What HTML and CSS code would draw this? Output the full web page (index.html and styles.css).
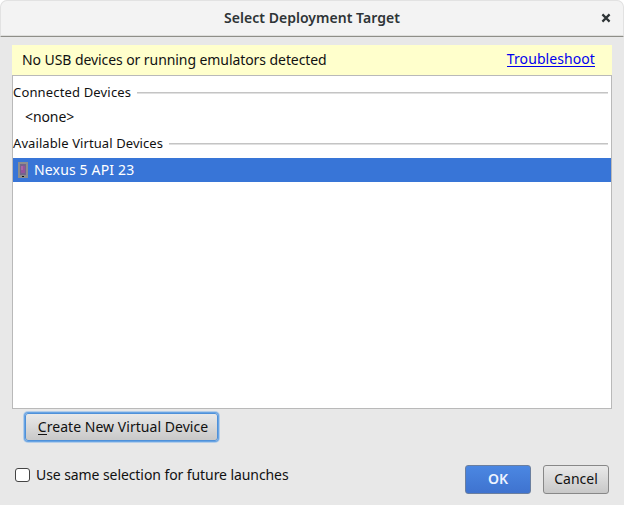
FILE: index.html
```html
<!DOCTYPE html>
<html lang="en">
<head>
<meta charset="utf-8">
<title>Select Deployment Target</title>
<link rel="stylesheet" href="styles.css">
</head>
<body>
<div class="dialog">
  <header class="titlebar">
    <h1 class="title">Select Deployment Target</h1>
    <button class="close" aria-label="Close"><svg width="10" height="10" viewBox="0 0 10 10"><path d="M1.4 1.4 8.6 8.6M8.6 1.4 1.4 8.6"/></svg></button>
  </header>
  <main class="content">
    <div class="banner"><span class="message">No USB devices or running emulators detected</span><a class="link" href="#">Troubleshoot</a></div>
    <div class="list">
      <div class="section first"><span class="connected">Connected Devices</span><i class="rule"></i></div>
      <div class="none">&lt;none&gt;</div>
      <div class="section second"><span class="available">Available Virtual Devices</span><i class="rule"></i></div>
      <div class="device"><svg class="phone" width="10" height="16" viewBox="0 0 10 16" shape-rendering="crispEdges"><path fill="#8e8e8e" d="M0 0h10v16H0z"/><path fill="#74648c" d="M2 2h6v11H2z"/><path fill="#95549b" d="M3 4h4v7H3z"/><path fill="#a967a7" d="M3 4h2v4H3z"/><path fill="#111" d="M4 14h2v1H4z"/></svg><span class="nexus">Nexus 5 API 23</span></div>
    </div>
    <button class="button create"><span class="create-label"><u>C</u>reate New Virtual Device</span></button>
    <footer class="footer">
      <label class="option"><input class="check" type="checkbox"><span class="option-label">Use same selection for future launches</span></label>
      <button class="button ok">OK</button>
      <button class="button cancel"><span class="cancel-label">Cancel</span></button>
    </footer>
  </main>
</div>
</body>
</html>
```
FILE: styles.css
```css
* { box-sizing: border-box; }
body { margin: 0; background: #fff; }
button { font: inherit; padding: 0; }
.dialog { width: 624px; height: 505px; background: #e8e8e8; border-radius: 7px 7px 0 0; overflow: hidden; font: 14px/20px "Noto Sans", sans-serif; color: #111; white-space: nowrap; }
.titlebar { height: 37px; display: grid; grid-template-columns: 36px 1fr 36px; align-items: center; padding-bottom: 2px; background: #f3f3f3; border: 1px solid #e2e2e2; border-bottom: 1px solid #8e8e88; border-radius: 7px 7px 0 0; box-shadow: inset 0 -1px #dededc; }
.title { grid-column: 2; margin: 0; text-align: center; font-size: 14px; font-weight: 600; line-height: 20px; color: #2e3436; letter-spacing: 0.03px; }
.close { width: 10px; height: 10px; margin-left: 14px; border: 0; background: none; }
.close svg { display: block; fill: none; stroke: #2e3436; stroke-width: 2.2; }
.content { padding: 8px 12px 0; }
.banner { height: 30px; padding: 0 17px 0 10px; display: flex; justify-content: space-between; align-items: center; background: #ffffcc; }
.message { letter-spacing: -0.075px; }
.link { height: 16px; color: #0000ee; text-decoration: none; border-bottom: 1px solid #0000ee; line-height: 16px; margin-bottom: 2px; letter-spacing: 0.08px; }
.list { height: 334px; border: 1px solid #b9b9b9; background: #fff; }
.section { display: flex; align-items: center; gap: 6px; height: 20px; padding-right: 3px; font-size: 13px; }
.connected { letter-spacing: 0.16px; }
.available { letter-spacing: 0.09px; }
.rule { flex: 1; height: 2px; margin-top: 1px; background: #e0e0e0; border-top: 1px solid #c4c4c4; }
.first { margin-top: 6px; }
.none { height: 31px; padding: 5px 0 0 12px; letter-spacing: -0.1px; }
.device { height: 24px; margin-top: 5px; padding-left: 5px; display: flex; gap: 6px; align-items: center; background: #3875d7; color: #fff; }
.nexus { letter-spacing: 0.16px; }
.button { display: flex; align-items: center; justify-content: center; border: 1px solid #888; border-radius: 3px; background: linear-gradient(#e9e9e9, #c8c8c8); color: #111; }
.create { width: 193px; height: 28px; margin: 4px 0 0 13px; padding: 0 0 1px 3px; border-color: #4f91d9; box-shadow: 0 0 0 1px #69a4e3, 0 0 0 2px #b2cdea; }
.create-label { letter-spacing: 0.04px; }
.create u { text-decoration: none; box-shadow: 0 1px #111; display: inline-block; line-height: 15px; }
.footer { height: 30px; margin-top: 23px; padding-right: 3px; display: flex; align-items: center; }
.option { display: flex; align-items: center; margin: 0 auto 9px 3px; gap: 6px; }
.option-label { letter-spacing: -0.08px; }
.check { appearance: none; width: 15px; height: 14px; margin: 0; border: 1px solid #444; border-radius: 3px; background: #fff; }
.ok, .cancel { width: 66px; height: 29px; }
.ok { margin-right: 12px; color: #eef4ff; font-weight: 600; background: linear-gradient(#4b87e2, #3f73cf); border-color: #6b7f9f; }
```
